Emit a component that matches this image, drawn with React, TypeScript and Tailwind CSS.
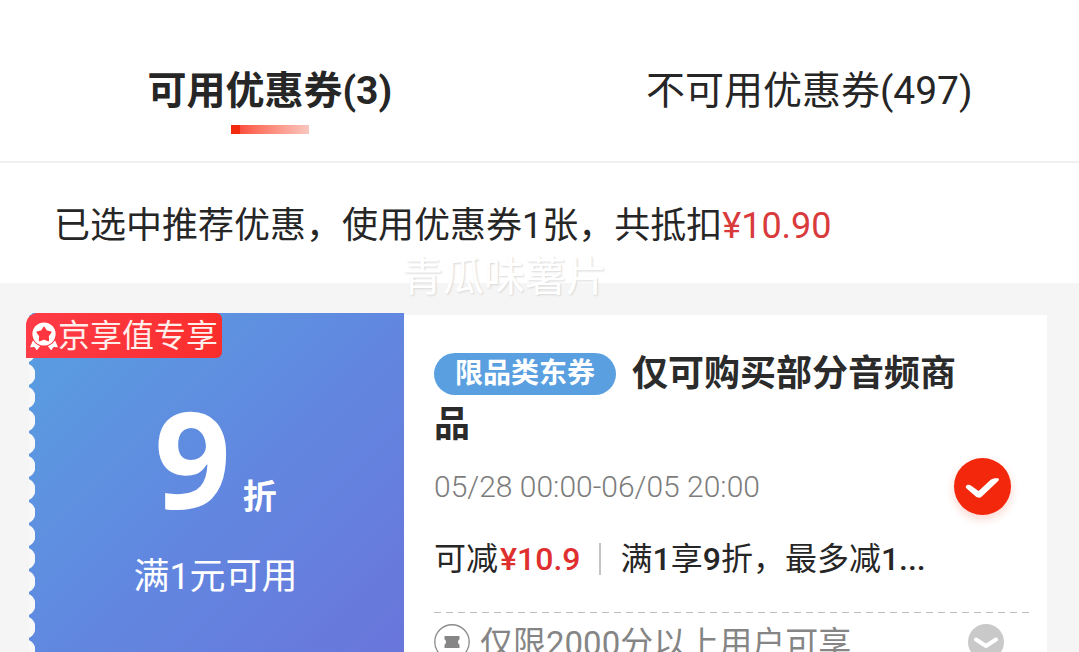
import { useState } from "react";

const tabs = [
  { id: "usable", label: "可用优惠券", count: 3 },
  { id: "unusable", label: "不可用优惠券", count: 497 },
];

function MedalIcon() {
  return (
    <svg viewBox="0 0 28 28" className="h-7 w-7 shrink-0" fill="none">
      <path d="M3 18.2 0 25.2l4.4-.3L6.8 28.4l4.6-6Z" fill="#fff" />
      <path d="M25 18.2 28 25.2l-4.4-.3-2.4 3.5-4.6-6Z" fill="#fff" />
      <circle cx="14" cy="12" r="12.6" fill="#ff363f" />
      <circle cx="14" cy="12" r="11.6" fill="#fff" />
      <path
        d="m14 5.4 2.3 3.7 4.5 1.2-2.8 3.6.4 4.5-4.4-1.6-4.4 1.6.4-4.5-2.8-3.6 4.5-1.2Z"
        fill="#ff363f"
        stroke="#ff363f"
        strokeWidth="1.6"
        strokeLinejoin="round"
      />
    </svg>
  );
}

function TicketIcon() {
  return (
    <svg viewBox="0 0 36 36" className="h-9 w-9 shrink-0" fill="none">
      <circle cx="18" cy="18" r="17.2" stroke="#8c8c8c" strokeWidth="1.4" />
      <path
        d="M10.5 12h15v3.5c-2 .6-2 4.4 0 5V24h-15v-3.5c2-.6 2-4.4 0-5Z"
        fill="#868686"
      />
    </svg>
  );
}

function Tabs() {
  const [active, setActive] = useState("usable");

  return (
    <div role="tablist" className="flex border-b-2 border-[#f0f0f0]">
      {tabs.map((tab) => (
        <button
          key={tab.id}
          role="tab"
          aria-selected={active === tab.id}
          onClick={() => setActive(tab.id)}
          className="flex flex-1 flex-col items-center pt-[65px] pb-[27px]"
        >
          <span
            className={
              active === tab.id
                ? "text-[39px] leading-[52px] font-bold"
                : "text-[39px] leading-[52px]"
            }
          >
            {tab.label}({tab.count})
          </span>
          {active === tab.id && (
            <span className="mt-2 flex h-[9px] w-[78px]">
              <span className="w-[9px] bg-[#f0290f]" />
              <span className="flex-1 bg-linear-to-r from-[#fb4f3f] to-[#f8c6bf]" />
            </span>
          )}
        </button>
      ))}
    </div>
  );
}

function Summary() {
  return (
    <div className="relative px-[54px] pt-[37px] pb-[31px]">
      <p className="text-[36px] leading-[52px]">
        已选中推荐优惠，使用优惠券1张，共抵扣
        <span className="text-[#d93a3c]">¥10.90</span>
      </p>
      <span className="absolute -bottom-5 left-[402px] text-[41px] leading-[52px] text-white [text-shadow:1px_1px_2px_#d8d8d8]">
        青瓜味薯片
      </span>
    </div>
  );
}

function Discount() {
  return (
    <div className="relative flex w-[375px] shrink-0 bg-linear-135 from-[#589fe0] via-[#6187e0] to-[#6a74da]">
      <div className="w-1.5 bg-[radial-gradient(circle_at_-5px_50%,#f8f8f8_11px,transparent_12px)] bg-[length:6px_23px] bg-[position:0_4px]" />
      <div className="flex flex-1 flex-col items-center pt-20 pr-2 text-white">
        <p className="flex items-baseline gap-3 font-bold">
          <span className="font-['Noto_Sans',sans-serif] text-[134px] leading-[128px]">
            9
          </span>
          <span className="text-[34px] leading-[52px]">折</span>
        </p>
        <p className="mt-7 text-[36px] leading-[52px]">满1元可用</p>
      </div>
      <span className="absolute top-0 -left-[3px] flex h-[45px] items-center rounded-tl-xl rounded-r-md bg-linear-to-r from-[#ff3b47] to-[#f92d2b] px-1 text-[32px] leading-[48px] text-[#ffeeea]">
        <MedalIcon />
        京享值专享
      </span>
    </div>
  );
}

function Details() {
  const [checked, setChecked] = useState(true);

  return (
    <div className="mt-0.5 min-w-0 flex-1 bg-white pt-[34px] pr-4 pl-[30px]">
      <h2 className="pr-16 text-[36px] leading-[51px] font-bold text-[#2b2b2b]">
        <span className="mr-4 inline-block rounded-full bg-[#5a9fdf] px-[21px] align-[3px] text-[28px] leading-[42px] text-white">
          限品类东券
        </span>
        仅可购买部分音频商品
      </h2>
      <div className="mt-[7px] flex items-center justify-between pr-5">
        <time className="text-[30px] leading-[52px] font-light text-[#7c7c7c]">
          05/28 00:00-06/05 20:00
        </time>
        <label className="grid h-[57px] w-[57px] place-items-center">
          <input
            type="checkbox"
            aria-label="使用此优惠券"
            checked={checked}
            onChange={() => setChecked(!checked)}
            className="col-start-1 row-start-1 h-[57px] w-[57px] appearance-none rounded-full border-2 border-gray-300 shadow-[0_4px_10px_#f2270c33] checked:border-0 checked:bg-[#f2270c]"
          />
          {checked && (
            <svg
              viewBox="0 0 57 57"
              className="pointer-events-none col-start-1 row-start-1 h-[57px] w-[57px]"
              fill="none"
            >
              <path
                d="M11.8 28.6c.8-2 3.4-2.5 5.4-.9l7.4 5.4 11.8-11c1.8-1.7 5-2.3 7.8-1.8 1 .3.9 1.9 0 2.8L27.8 38.6c-1.6 1.6-4.5 1.6-6 0l-9.2-8c-.7-.7-1-1.3-.8-2Z"
                fill="#fff"
              />
            </svg>
          )}
        </label>
      </div>
      <div className="mt-[18px] flex items-center text-[32px] leading-[52px] text-[#262626]">
        <span>可减</span>
        <span className="ml-0.5 font-medium text-[#e02f2f]">¥10.9</span>
        <span className="mx-[19px] h-8 w-0.5 bg-[#c4c4c4]" />
        <span className="truncate">
          满<b className="font-medium">1</b>享<b className="font-medium">9</b>
          折，最多减<b className="font-medium">1...</b>
        </span>
      </div>
      <div className="mt-[27px] h-px bg-[repeating-linear-gradient(90deg,#bdbdbd_0_7px,transparent_7px_12px)]" />
      <div className="flex items-start pt-[11px] pr-[27px] pb-3">
        <TicketIcon />
        <span className="-mt-1.5 ml-2.5 flex-1 text-[33px] leading-[52px] text-[#858585]">
          仅限2000分以上用户可享
        </span>
        <button
          aria-label="展开"
          className="flex h-9 w-9 items-center justify-center rounded-full bg-[#c9c9c9]"
        >
          <svg viewBox="0 0 36 36" className="h-9 w-9" fill="none">
            <path
              d="m8 15.5 10 6.5 10-6.5"
              stroke="#fff"
              strokeWidth="4"
              strokeLinecap="round"
              strokeLinejoin="round"
            />
          </svg>
        </button>
      </div>
    </div>
  );
}

export default function App() {
  return (
    <div className="flex h-screen flex-col overflow-hidden bg-white font-['Roboto','Noto_Sans_CJK_SC',sans-serif] text-[#262626]">
      <Tabs />
      <Summary />
      <main className="flex-1 bg-[#f5f5f5] pt-[30px] pr-8 pl-[29px]">
        <section className="flex">
          <Discount />
          <Details />
        </section>
      </main>
    </div>
  );
}
